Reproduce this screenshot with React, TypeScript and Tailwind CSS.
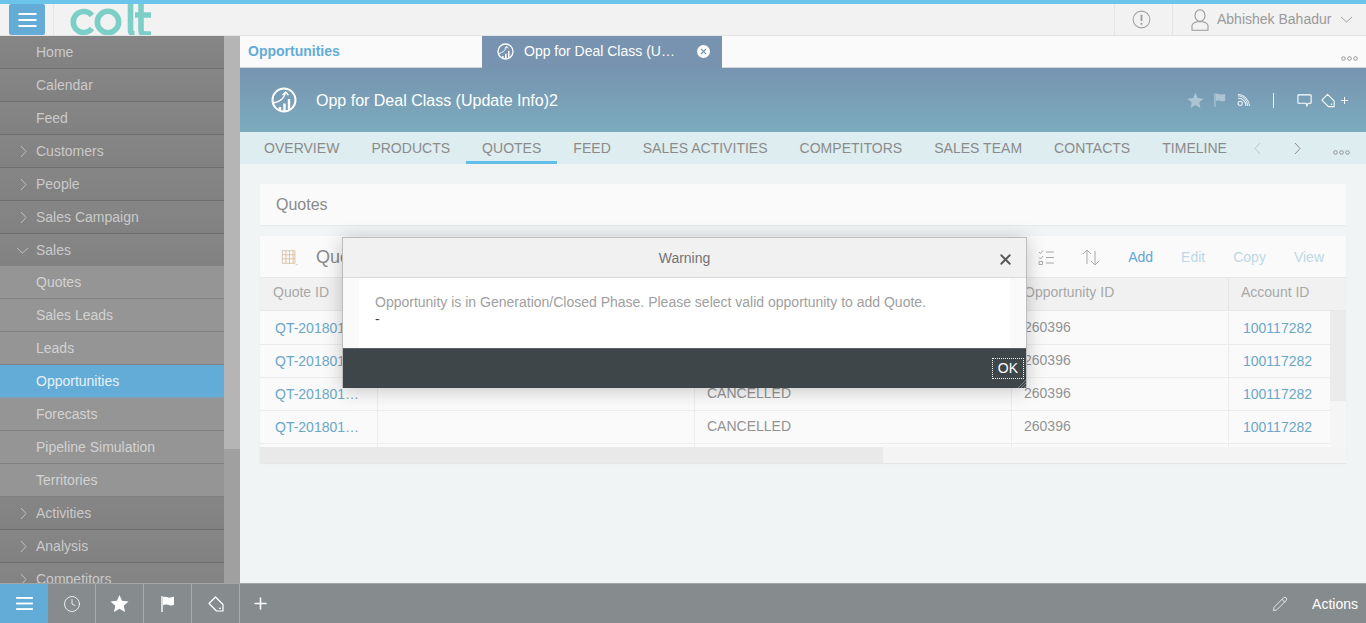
import React from "react";
import { Clock, Plus, Pencil, X } from "lucide-react";

const font = { fontFamily: '"Liberation Sans", Arial, sans-serif' };

function Bars({ className }: { className: string }) {
  return (
    <svg viewBox="0 0 18 14" className={className} fill="currentColor">
      <rect x="0" y="0" width="18" height="2" />
      <rect x="0" y="6" width="18" height="2" />
      <rect x="0" y="12" width="18" height="2" />
    </svg>
  );
}

function Star({ className }: { className: string }) {
  return (
    <svg viewBox="0 0 20 20" className={className} fill="currentColor">
      <path d="M10 1l2.7 6.2 6.8.6-5.1 4.500 1.500 6.600L10 15.400 4.100 18.900l1.500-6.600L.5 7.800l6.800-.6z" />
    </svg>
  );
}

function Flag({ className }: { className: string }) {
  return (
    <svg viewBox="0 0 14 16" className={className} fill="currentColor">
      <rect x="0" y="0" width="2" height="16" opacity="0.7" />
      <path d="M2 1c3-1.200 5 1 7.500.6L13 .8v8c-2 .9-4 .8-6 0-2-.6-3.500-.2-5 .4z" />
    </svg>
  );
}

function TagIcon({ className, strokeWidth = 1.2 }: { className: string; strokeWidth?: number }) {
  return (
    <svg viewBox="0 0 16 16" className={className} fill="none" stroke="currentColor" strokeWidth={strokeWidth} strokeLinejoin="round">
      <path d="M1 7.500L7.500 1 15 8.500V15H8.500z" />
      <circle cx="12" cy="12.300" r="0.900" fill="currentColor" stroke="none" />
    </svg>
  );
}

function Bubble({ className }: { className: string }) {
  return (
    <svg viewBox="0 0 16 14" className={className} fill="none" stroke="currentColor" strokeWidth="1.200" strokeLinejoin="round">
      <path d="M1.500 1h13a.6.6 0 0 1 .6.6v7.800a.6.6 0 0 1-.6.6h-2.500l-1.500 3-.7-3H1.500a.6.6 0 0 1-.6-.6V1.600a.6.6 0 0 1 .6-.6z" />
    </svg>
  );
}

function RssIcon({ className }: { className: string }) {
  return (
    <svg viewBox="0 0 14 14" className={className} fill="none" stroke="currentColor" strokeWidth="1.100">
      <circle cx="3.500" cy="10" r="2.300" />
      <path d="M1 4.500a8 8 0 0 1 8.500 8.500M1 2a11 11 0 0 1 10.500 11M1 .3a13.500 13.500 0 0 1 12.500 12.700" />
    </svg>
  );
}

function UserIcon({ className }: { className: string }) {
  return (
    <svg viewBox="0 0 18 22" className={className} fill="none" stroke="currentColor" strokeWidth="1.100" strokeLinejoin="round">
      <ellipse cx="9" cy="6.500" rx="5" ry="5.800" />
      <path d="M1 21.300v-4.300c0-2.500 2.500-3.500 5-4.200h6c2.500.7 5 1.700 5 4.200v4.300z" />
    </svg>
  );
}

function Chev({ dir, className }: { dir: "l" | "r" | "d"; className: string }) {
  const d = dir === "r" ? "M1 1l5 5.500-5 5.500" : dir === "l" ? "M6 1L1 6.500 6 12" : "M1 1l5.500 5L12 1";
  const vb = dir === "d" ? "0 0 13 7" : "0 0 7 13";
  return (
    <svg viewBox={vb} className={className} fill="none" stroke="currentColor" strokeWidth="1">
      <path d={d} />
    </svg>
  );
}

function OppIcon({ className }: { className: string }) {
  return (
    <svg viewBox="0 0 26 26" className={className} fill="none" stroke="currentColor" strokeWidth="2">
      <circle cx="13" cy="13" r="11.500" />
      <path d="M2.500 16c3-.5 6-1.500 8.500-4 1.700-1.800 3-3.500 3.500-6.500M11.500 8l3.200-3 2.800 3.200" strokeWidth="1.400" />
      <path d="M9 24v-4M13.500 24v-7.500" strokeWidth="2.400" />
      <path d="M18 23v-11" strokeWidth="2.400" />
    </svg>
  );
}

function Logo() {
  return (
    <svg viewBox="0 0 84 32" className="ml-[16px] h-[32px] w-[84px]" fill="none" stroke="#7ccfc6" strokeWidth="5.600">
      <title>colt</title>
      <path d="M22 11.500a10.500 10.500 0 1 0 0 13" />
      <circle cx="38" cy="18" r="10.700" />
      <path d="M60.500 -2v28q0 4 4 4" />
      <path d="M71 -2v28q0 4 4 4h6M65 11h16" />
    </svg>
  );
}

const menu: { label: string; kind: "leaf" | "top" | "open" | "sub" | "active" }[] = [
  { label: "Home", kind: "leaf" },
  { label: "Calendar", kind: "leaf" },
  { label: "Feed", kind: "leaf" },
  { label: "Customers", kind: "top" },
  { label: "People", kind: "top" },
  { label: "Sales Campaign", kind: "top" },
  { label: "Sales", kind: "open" },
  { label: "Quotes", kind: "sub" },
  { label: "Sales Leads", kind: "sub" },
  { label: "Leads", kind: "sub" },
  { label: "Opportunities", kind: "active" },
  { label: "Forecasts", kind: "sub" },
  { label: "Pipeline Simulation", kind: "sub" },
  { label: "Territories", kind: "sub" },
  { label: "Activities", kind: "top" },
  { label: "Analysis", kind: "top" },
  { label: "Competitors", kind: "top" },
];

function MenuRow({ label, kind }: { label: string; kind: string }) {
  const tone =
    kind === "active"
      ? "h-[33px] border-b bg-[#64acd8] text-[#e6f0f6] border-[#7f9fb5]"
      : kind === "sub"
        ? "h-[33px] border-b bg-[#959595] text-[#d2d2d2] border-[#808080]"
        : kind === "open"
          ? "h-[32px] bg-gradient-to-b from-[#868686] to-[#818181] text-[#cacaca]"
          : "h-[33px] border-b bg-gradient-to-b from-[#868686] to-[#818181] text-[#cacaca] border-[#6d6d6d]";
  return (
    <div className={`flex shrink-0 items-center pl-[16px] text-[14px] ${tone}`}>
      <span className="flex w-[20px] shrink-0 items-center">
        {kind === "top" && <Chev dir="r" className="ml-[4px] h-[13px] w-[7px] text-[#c0c0c0]" />}
        {kind === "open" && <Chev dir="d" className="h-[7px] w-[13px] text-[#c0c0c0]" />}
      </span>
      {label}
    </div>
  );
}

const tabs = ["OVERVIEW", "PRODUCTS", "QUOTES", "FEED", "SALES ACTIVITIES", "COMPETITORS", "SALES TEAM", "CONTACTS", "TIMELINE"];

function Dots({ className }: { className: string }) {
  return (
    <svg viewBox="0 0 17 5" className={className} fill="none" stroke="#8c8c8c" strokeWidth="0.900">
      <circle cx="2.500" cy="2.500" r="1.800" />
      <circle cx="8.500" cy="2.500" r="1.800" />
      <circle cx="14.500" cy="2.500" r="1.800" />
    </svg>
  );
}

const gridCols = "grid grid-cols-[118px_317px_317px_217px_101px]";

function Row() {
  return (
    <div className={`${gridCols} h-[33px] shrink-0 border-b border-[#ececec] text-[14px] text-[#939393]`}>
      <div className="flex items-center border-r border-[#ececec] pl-[15px] text-[#6ba7c9]">
        <span className="block w-[90px] truncate">QT-2018010023</span>
      </div>
      <div className="border-r border-[#ececec]" />
      <div className="flex items-center border-r border-[#ececec] pl-[12px] pb-[2px]">CANCELLED</div>
      <div className="flex items-center border-r border-[#ececec] pl-[12px] pb-[2px]">260396</div>
      <div className="flex items-center pl-[14px] text-[#6ba7c9]">100117282</div>
    </div>
  );
}

export default function App() {
  return (
    <div style={font} className="relative flex h-[623px] w-[1366px] flex-col overflow-hidden bg-[#f0f4f5]">
      <div className="h-[4px] shrink-0 bg-[#6bc4ea]" />

      <header className="flex h-[32px] shrink-0 items-stretch overflow-hidden border-b border-[#e4e4e4] bg-[#f2f2f2]">
        <div className="ml-[9px] flex w-[36px] items-center justify-center rounded-[2px] bg-[#64acd8] text-white">
          <Bars className="h-[14px] w-[19px]" />
        </div>
        <div className="ml-[8px] w-px bg-[#e4e4e4]" />
        <Logo />
        <div className="ml-auto flex w-[59px] items-center justify-center border-x border-[#e4e4e4] pr-[5px]">
          <svg viewBox="0 0 20 20" className="h-[19px] w-[19px] text-[#a0a0a0]" fill="none" stroke="currentColor">
            <circle cx="10" cy="10" r="8.800" strokeWidth="1.100" />
            <path d="M10 5v6.500M10 13.500v2" strokeWidth="2" />
          </svg>
        </div>
        <div className="flex w-[193px] items-center pl-[18px] text-[14px] text-[#9a9a9a]">
          <UserIcon className="h-[22px] w-[18px] shrink-0 text-[#9a9a9a]" />
          <span className="ml-[8px]">Abhishek Bahadur</span>
          <Chev dir="d" className="ml-[9px] h-[7px] w-[13px] text-[#a0a0a0]" />
        </div>
      </header>

      <div className="flex min-h-0 flex-1">
        <aside className="flex w-[240px] shrink-0">
          <nav className="flex w-[224px] flex-col overflow-hidden bg-[#808080]">
            {menu.map((m) => (
              <MenuRow key={m.label} label={m.label} kind={m.kind} />
            ))}
          </nav>
          <div className="flex w-[16px] flex-col bg-[#a0a0a0]">
            <div className="h-[413px] bg-[#b5b5b5]" />
          </div>
        </aside>

        <main className="flex min-w-0 flex-1 flex-col">
          <div className="flex h-[32px] shrink-0 items-stretch border-b border-[#d6d6d6] bg-[#fafafa]">
            <div className="w-[242px] pl-[8px] pt-[5px] text-[14px] font-bold text-[#62acd8]">Opportunities</div>
            <div className="-mb-px flex w-[240px] items-center bg-[#7793b0] pb-[1px] pl-[15px] text-[14px] text-white">
              <OppIcon className="h-[17px] w-[17px]" />
              <span className="ml-[10px] w-[155px] truncate">Opp for Deal Class (Update Info)2</span>
              <span className="ml-[18px] flex h-[13px] w-[13px] items-center justify-center rounded-full bg-white">
                <X className="h-[9px] w-[9px] text-[#7793b0]" strokeWidth={3} />
              </span>
            </div>
            <div className="ml-auto flex items-end pb-[6px] pr-[8px]">
              <Dots className="h-[5px] w-[17px]" />
            </div>
          </div>

          <div className="flex h-[64px] shrink-0 items-center bg-gradient-to-b from-[#7694b0] to-[#7cabbe] pl-[31px] pr-[16px] text-white">
            <OppIcon className="h-[26px] w-[26px]" />
            <span className="ml-[19px] pt-[2px] text-[16px] leading-none">Opp for Deal Class (Update Info)2</span>
            <div className="ml-auto flex items-center">
              <Star className="h-[17px] w-[17px] text-[#adc4d3]" />
              <Flag className="ml-[10px] h-[14px] w-[12px] text-[#adc4d3]" />
              <RssIcon className="ml-[11px] h-[13px] w-[13px] text-[#e8f0f4]" />
              <div className="ml-[23px] h-[15px] w-[1.500px] bg-[#e8f0f4]" />
              <Bubble className="ml-[23px] h-[13px] w-[15px] text-white" />
              <TagIcon className="ml-[9px] h-[15px] w-[14px] text-white" />
              <Plus className="ml-[4px] h-[11px] w-[11px] text-white" strokeWidth={2} />
            </div>
          </div>

          <div className="flex h-[32px] shrink-0 items-stretch bg-[#deedf0] pl-[8px] text-[14px] tracking-[0.02px] text-[#8b8b8b]">
            {tabs.map((t) => (
              <div
                key={t}
                className={`flex items-center px-[16px] pt-[3px] ${t === "QUOTES" ? "border-b-[3px] border-[#63bfe8]" : "border-b-[3px] border-transparent"}`}
              >
                {t}
              </div>
            ))}
            <div className="ml-[11px] flex items-center gap-[33px]">
              <Chev dir="l" className="h-[13px] w-[7px] text-[#bcc8cc]" />
              <Chev dir="r" className="h-[13px] w-[7px] text-[#8b8b8b]" />
            </div>
            <div className="ml-auto flex items-end pb-[9px] pr-[16px]">
              <Dots className="h-[5px] w-[17px]" />
            </div>
          </div>

          <div className="flex flex-1 flex-col gap-[11px] px-[20px] pt-[20px]">
            <div className="flex h-[41px] items-center bg-[#fafafa] pl-[16px] text-[16px] text-[#8a8a8a] shadow-[0_1px_1px_rgba(0,0,0,0.04)]">
              Quotes
            </div>

            <section className="flex h-[227px] flex-col overflow-hidden bg-[#fafafa] shadow-[0_1px_1px_rgba(0,0,0,0.05)]">
              <div className="flex h-[41px] shrink-0 items-center pl-[20px] pr-[22px] pt-[1px] text-[14px]">
                <svg viewBox="0 0 20 20" className="h-[18px] w-[19px]" fill="none" stroke="#d3b28f" strokeWidth="0.800">
                  <path d="M2 3h14v14H2zM2 7.500h14M2 12h14M6 3v14M10 3v14M14 3v14" />
                  <path d="M17 18l1 1 1-1" />
                </svg>
                <span className="ml-[17px] text-[18px] text-[#8a8a8a]">Quotes</span>
                <div className="ml-auto flex items-center gap-[28px]">
                  <svg viewBox="0 0 16 16" className="h-[16px] w-[16px]" fill="none" stroke="#a8a8a8" strokeWidth="1">
                    <path d="M1 3l1.500 1.500L5 1.500M1 8.500L2.500 10 5 7M1 12.500h3.500v3H1zM8 3h8M8 8.500h8M8 14h8" />
                  </svg>
                  <svg viewBox="0 0 18 17" className="h-[17px] w-[18px]" fill="none" stroke="#a8a8a8" strokeWidth="1">
                    <path d="M5 15V1M1 5l4-4 4 4" />
                    <path d="M13 2v14M9 12l4 4 4-4" />
                  </svg>
                  <span className="text-[#62a6d6]">Add</span>
                  <span className="text-[#bcd8e8]">Edit</span>
                  <span className="text-[#bcd8e8]">Copy</span>
                  <span className="text-[#bcd8e8]">View</span>
                </div>
              </div>

              <div className="grid h-[34px] shrink-0 grid-cols-[118px_317px_317px_217px_117px] border-y border-[#e8e8e8] bg-[#f1f1f1] text-[14px] text-[#a8a8a8]">
                <div className="flex items-center border-r border-[#e8e8e8] pb-[3px] pl-[13px]">Quote ID</div>
                <div className="border-r border-[#e8e8e8]" />
                <div className="border-r border-[#e8e8e8]" />
                <div className="flex items-center border-r border-[#e4e4e4] pb-[3px] pl-[12px]">Opportunity ID</div>
                <div className="flex items-center pb-[3px] pl-[12px]">Account ID</div>
              </div>

              <div className="flex h-[136px] shrink-0">
                <div className="flex w-[1070px] shrink-0 flex-col overflow-hidden pt-[1px]">
                  <Row />
                  <Row />
                  <Row />
                  <Row />
                  <div className={`${gridCols} h-[3px] shrink-0`}>
                    <div className="border-r border-[#ececec]" />
                    <div className="border-r border-[#ececec]" />
                    <div className="border-r border-[#ececec]" />
                    <div className="border-r border-[#ececec]" />
                  </div>
                </div>
                <div className="w-[16px] bg-[#f5f5f5]">
                  <div className="h-[90px] bg-[#ebebeb]" />
                </div>
              </div>

              <div className="h-[16px] shrink-0 bg-[#f4f4f4]">
                <div className="h-full w-[623px] bg-[#e9e9e9]" />
              </div>
            </section>
          </div>
        </main>
      </div>

      <footer className="flex h-[40px] shrink-0 items-stretch border-t border-[#a3a6a8] bg-[#868b8e] text-white">
        <div className="flex w-[48px] items-center justify-center bg-[#64acd8]">
          <Bars className="h-[13px] w-[17px]" />
        </div>
        <div className="flex w-[48px] items-center justify-center border-r border-[#a9acae]">
          <Clock className="h-[18px] w-[18px]" strokeWidth={1.100} />
        </div>
        <div className="flex w-[48px] items-center justify-center border-r border-[#a9acae]">
          <Star className="h-[19px] w-[19px]" />
        </div>
        <div className="flex w-[48px] items-center justify-center border-r border-[#a9acae]">
          <Flag className="h-[16px] w-[14px]" />
        </div>
        <div className="flex w-[48px] items-center justify-center border-r border-[#a9acae]">
          <TagIcon className="h-[16px] w-[16px]" />
        </div>
        <div className="flex w-[41px] items-center justify-center">
          <Plus className="h-[19px] w-[19px]" strokeWidth={2} />
        </div>
        <div className="ml-auto flex items-center pr-[8px] text-[14px]">
          <Pencil className="h-[16px] w-[16px] text-[#f4f4f4]" strokeWidth={1.300} />
          <span className="ml-[24px] pt-[2px]">Actions</span>
        </div>
      </footer>

      <div className="absolute left-[342px] top-[237px] flex h-[151px] w-[685px] flex-col border border-[#bdbdbd] border-b-0 bg-[#f1f1f1] shadow-[0_2px_18px_rgba(0,0,0,0.22)]">
        <div className="flex h-[40px] shrink-0 items-center justify-center border-b border-[#d9d9d9] pt-[1px] text-[14px] text-[#737373]">
          <span>Warning</span>
          <X className="absolute right-[12px] top-[13px] h-[17px] w-[17px] text-[#555]" strokeWidth={2.500} />
        </div>
        <div className="flex-1 bg-[#fafafa] px-[16px]">
          <div className="h-full bg-white px-[16px] pt-[16px] text-[14px] leading-[17px] text-[#a0a0a0]">
            Opportunity is in Generation/Closed Phase. Please select valid opportunity to add Quote.
            <div className="text-[#444]">-</div>
          </div>
        </div>
        <div className="relative flex h-[40px] shrink-0 items-center justify-end border-t border-[#566066] bg-[#3f4649] pr-[2px]">
          <span className="-mt-[1px] border border-dotted border-white px-[5px] text-[14px] leading-[19px] text-white">OK</span>
          <svg viewBox="0 0 8 8" className="absolute bottom-0 right-0 h-[8px] w-[8px]" stroke="#9a9a9a" strokeWidth="0.700">
            <path d="M0 8L8 0M3 8l5-5M6 8l2-2" />
          </svg>
        </div>
      </div>
    </div>
  );
}
